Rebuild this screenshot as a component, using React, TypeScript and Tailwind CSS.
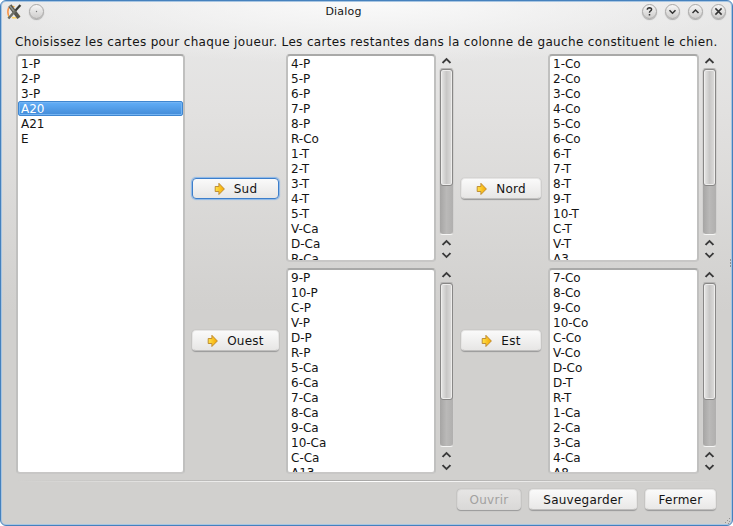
import React from 'react';

const unassigned = ['1-P', '2-P', '3-P', 'A20', 'A21', 'E'];
const south = ['4-P', '5-P', '6-P', '7-P', '8-P', 'R-Co', '1-T', '2-T', '3-T', '4-T', '5-T', 'V-Ca', 'D-Ca', 'R-Ca'];
const north = ['1-Co', '2-Co', '3-Co', '4-Co', '5-Co', '6-Co', '6-T', '7-T', '8-T', '9-T', '10-T', 'C-T', 'V-T', 'A3'];
const west = ['9-P', '10-P', 'C-P', 'V-P', 'D-P', 'R-P', '5-Ca', '6-Ca', '7-Ca', '8-Ca', '9-Ca', '10-Ca', 'C-Ca', 'A13'];
const east = ['7-Co', '8-Co', '9-Co', '10-Co', 'C-Co', 'V-Co', 'D-Co', 'D-T', 'R-T', '1-Ca', '2-Ca', '3-Ca', '4-Ca', 'A8'];

function CardList({ cards, selected }: { cards: string[]; selected?: string }) {
  return (
    <ul className="h-full min-w-0 flex-1 overflow-hidden rounded-[4px] border-2 border-x-[#c0c0bf] border-t-[#a9a9a8] border-b-[#c8c7c6] bg-white">
      {cards.map((card) => (
        <li
          key={card}
          className={
            card === selected
              ? 'h-[15px] rounded-[2px] border border-[#3f86d0] bg-linear-to-b from-[#62aef8] to-[#438cd8] pl-[2px] leading-[14px] text-white shadow-[inset_0_0_0_1px_#74b4f3]'
              : 'h-[15px] pl-[3px] leading-[16px]'
          }
        >
          {card}
        </li>
      ))}
    </ul>
  );
}

function Chevron({ down = false }: { down?: boolean }) {
  return (
    <svg width="11" height="8" viewBox="0 0 11 8" className={down ? 'rotate-180' : ''}>
      <path d="M1.5 7L5.5 3L9.5 7" fill="none" stroke="#f5f5f5" strokeWidth="1.3" />
      <path d="M1.5 6L5.5 2L9.5 6" fill="none" stroke="#3c3c3c" strokeWidth="1.8" />
    </svg>
  );
}

function ScrollBar() {
  return (
    <div className="flex h-full w-[15px] shrink-0 flex-col items-center pt-[3px]">
      <Chevron />
      <div className="mt-[3px] min-h-0 w-[15px] flex-1 rounded-[4px] border border-x-[#d2d1d0] border-t-[#b5b4b3] border-b-[#f6f6f5] bg-linear-to-r from-[#a6a5a4] via-[#bab9b8] to-[#b0afae]">
        <div className="h-[117px] w-[13px] rounded-[3px] border-[1.5px] border-[#888786] bg-linear-to-r from-[#e8e8e7] via-[#c8c7c6] to-[#dedddc] shadow-[inset_0_0_0_1px_#eeedec]" />
      </div>
      <div className="flex h-[27px] flex-col items-center pt-[4px]">
        <Chevron />
        <div className="mt-[4px] flex"><Chevron down /></div>
      </div>
    </div>
  );
}

function ScrollList({ cards }: { cards: string[] }) {
  return (
    <div className="flex min-h-0 gap-[3px]">
      <CardList cards={cards} />
      <ScrollBar />
    </div>
  );
}

function Arrow() {
  return (
    <svg width="12" height="14" viewBox="0 0 12 14">
      <defs>
        <linearGradient id="gold" x1="0" y1="0" x2="1" y2="0">
          <stop offset="0" stopColor="#ffe34a" />
          <stop offset="1" stopColor="#f5a500" />
        </linearGradient>
      </defs>
      <path d="M1.2 4.5H4.9V1.3L10.4 7L4.9 12.5V9.5H1.2Z" fill="url(#gold)" stroke="#b9852b" strokeWidth="0.9" strokeLinejoin="round" />
    </svg>
  );
}

const buttonBase = 'flex h-[21px] items-center justify-center rounded-[4px] border bg-linear-to-b tracking-[0.25px] ';

function MoveButton({ label, focused = false }: { label: string; focused?: boolean }) {
  return (
    <button
      className={
        buttonBase +
        'w-full gap-[8px] from-[#fafafa] to-[#e7e6e5] ' +
        (focused
          ? 'border-[#3c7ecb] shadow-[0_0_1px_1px_#8bb7e8]'
          : 'border-[#e6e5e4] border-b-[#c0bfbe] shadow-[0_1px_1px_#999,0_0_1px_#999]')
      }
    >
      <Arrow />
      {label}
    </button>
  );
}

function DialogButton({ label, width, disabled = false }: { label: string; width: string; disabled?: boolean }) {
  return (
    <button
      disabled={disabled}
      className={
        buttonBase +
        width +
        (disabled
          ? ' border-[#d8d7d6] from-[#e6e5e4] to-[#dad9d8] text-[#a2a1a0] shadow-[0_1px_1px_#999,0_0_1px_#999]'
          : ' border-[#e6e5e4] border-b-[#c0bfbe] from-[#fafafa] to-[#e9e8e7] shadow-[0_1px_1px_#999,0_0_1px_#999]')
      }
    >
      {label}
    </button>
  );
}

function WindowButton({ children }: { children?: React.ReactNode }) {
  return (
    <div className="flex size-[15px] items-center justify-center rounded-full border border-[#a9a8a7] bg-linear-to-b from-[#f6f6f6] to-[#cfcecd] shadow-[0_1px_1px_#aaa]">
      <svg width="13" height="13" viewBox="0 0 13 13" fill="none" stroke="#333" strokeWidth="1.5" className="shrink-0">
        {children}
      </svg>
    </div>
  );
}

function XLogo() {
  return (
    <svg width="15" height="16" viewBox="0 0 15 16" fill="none">
      <path d="M7.5 2.7Q2 1.5 1.3 5.5Q.3 10 2 13" stroke="#ffae38" strokeWidth="1.4" />
      <path d="M1.3 3.5Q0 8 1.5 11" stroke="#f06b55" strokeWidth=".7" />
      <path d="M5 13.5Q10 15 12.7 11" stroke="#ffd35b" strokeWidth="1.4" />
      <path d="M2.8 1.5L12 13.8" stroke="#55564f" strokeWidth="3.8" />
      <path d="M13.4 1L1.4 14.5" stroke="#6c6e64" strokeWidth="2.5" />
      <path d="M13.2 1.3L8.5 6.5" stroke="#343632" strokeWidth="1.7" />
      <path d="M2.6 1.7L6.8 7" stroke="#92948c" strokeWidth="1.5" />
    </svg>
  );
}

export default function App() {
  return (
    <div className="h-[526px] w-[733px] bg-white font-['DejaVu_Sans',sans-serif] text-[12px] text-[#141414]">
      <div className="relative flex h-full flex-col rounded-[6px] border border-[#4581bd] bg-[radial-gradient(ellipse_380px_64px_at_50%_0%,#fafafa,transparent),linear-gradient(to_bottom,#e9e9e9_0,#e2e1e0_110px,#d1d0ce_310px)] px-[15px] shadow-[inset_0_0_0_1px_#a7c5e2]">
        <header className="-mx-[15px] flex h-[31px] items-start pt-[3px]">
          <div className="flex w-[90px] items-start gap-[7px] pl-[6px]">
            <XLogo />
            <WindowButton><circle cx="6.5" cy="6.5" r=".7" fill="#777" stroke="none" /></WindowButton>
          </div>
          <h1 className="flex-1 pr-[45px] text-center text-[11px] leading-4 tracking-[0.2px]">Dialog</h1>
          <div className="flex w-[91px] gap-2 pl-px">
            <WindowButton><path d="M4.3 4.7Q4.4 2.8 6.5 2.8Q8.6 2.9 8.6 4.5Q8.5 5.5 7.3 6.1Q6.5 6.5 6.5 7.8M6.5 9V10.4" /></WindowButton>
            <WindowButton><path d="M3.5 5.2L6.5 8.2L9.5 5.2" /></WindowButton>
            <WindowButton><path d="M3.5 8L6.5 5L9.5 8" /></WindowButton>
            <WindowButton><path d="M3.4 3.4L9.6 9.6M9.6 3.4L3.4 9.6" /></WindowButton>
          </div>
        </header>
        <p className="-ml-px h-[22px] text-[12px] leading-[20px] tracking-[0.345px] whitespace-nowrap">
          Choisissez les cartes pour chaque joueur. Les cartes restantes dans la colonne de gauche constituent le chien.
        </p>
        <main className="grid h-[420px] shrink-0 grid-cols-[169px_87px_168px_80px_169px] gap-x-[7px]">
          <CardList cards={unassigned} selected="A20" />
          <div className="flex flex-col pt-[124px]">
            <MoveButton label="Sud" focused />
            <div className="h-[131px]" />
            <MoveButton label="Ouest" />
          </div>
          <div className="grid min-h-0 grid-rows-[208px_206px] gap-y-[6px]">
            <ScrollList cards={south} />
            <ScrollList cards={west} />
          </div>
          <div className="flex flex-col pt-[124px]">
            <MoveButton label="Nord" />
            <div className="h-[131px]" />
            <MoveButton label="Est" />
          </div>
          <div className="grid min-h-0 grid-rows-[208px_206px] gap-y-[6px]">
            <ScrollList cards={north} />
            <ScrollList cards={east} />
          </div>
        </main>
        <div className="mt-[6px] h-px shrink-0 bg-linear-to-r from-transparent via-[#aaa9a8] to-transparent" />
        <div className="h-px shrink-0 bg-linear-to-r from-transparent via-white to-transparent" />
        <footer className="mt-[7px] flex justify-end gap-2 pr-px">
          <DialogButton label="Ouvrir" width="w-[64px]" disabled />
          <DialogButton label="Sauvegarder" width="w-[108px]" />
          <DialogButton label="Fermer" width="w-[71px]" />
        </footer>
        <svg className="absolute top-[258px] right-0" width="3" height="10" fill="#929190">
          <path d="M1 0h1v2h-1zM1 3h1v2h-1zM1 6h1v2h-1z" />
        </svg>
        <svg className="absolute right-[1px] bottom-[1px]" width="6" height="6" fill="#929190">
          <path d="M4 0h1v1h-1zM2 2h1v1h-1zM4 3h1v1h-1zM0 4h1v1h-1zM3 5h1v1h-1z" />
        </svg>
      </div>
    </div>
  );
}
